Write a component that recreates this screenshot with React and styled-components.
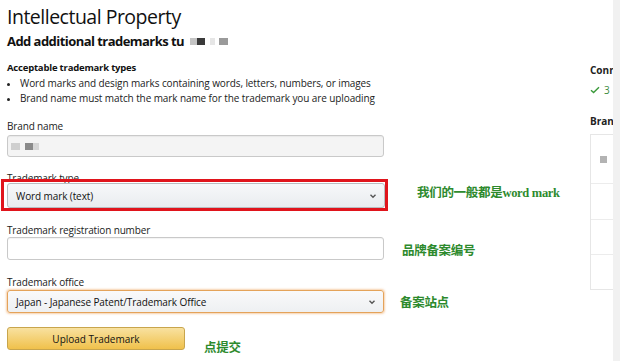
import React from "react"
import styled, { createGlobalStyle, css } from "styled-components"

const GlobalStyle = createGlobalStyle`
  html, body {
    margin: 0;
    padding: 0;
    background: #fff;
  }
  body {
    font-family: "Open Sans", "Noto Sans", sans-serif;
    color: #111;
    width: 620px;
    height: 361px;
    overflow: hidden;
  }
`

const Page = styled.div`
  display: flex;
  width: 620px;
  height: 361px;
`

const Main = styled.div`
  flex: 1;
  padding: 3px 0 0 7px;
`

const Title = styled.h1`
  margin: 0;
  font-size: 19.5px;
  font-weight: 400;
  line-height: 28px;
  letter-spacing: -0.5px;
  color: #111;
`

const Subtitle = styled.h2`
  margin: 0;
  font-size: 13px;
  font-weight: 700;
  line-height: 20px;
  letter-spacing: -0.55px;
  display: flex;
  align-items: center;
`

// blurred store name
const Blur = styled.span`
  display: inline-block;
  width: ${p => p.w}px;
  height: 7px;
  background: ${p => p.c};
  filter: blur(0.6px);
  margin-left: ${p => p.gap || 0}px;
`

const TypesHeading = styled.div`
  margin-top: 10px;
  font-size: 9.5px;
  font-weight: 700;
  line-height: 14px;
  letter-spacing: -0.2px;
`

const Bullets = styled.ul`
  margin: 1px 0 0;
  padding-left: 13px;
  font-size: 10px;
  line-height: 15px;
  letter-spacing: -0.1px;
  color: #222;
  li::marker {
    font-size: 9px;
  }
`

const Row = styled.div`
  display: flex;
  align-items: flex-end;
  margin-top: ${p => p.top}px;
`

const Field = styled.div`
  width: 377px;
  flex: none;
`

const Label = styled.div`
  font-size: 10px;
  line-height: 14px;
  letter-spacing: -0.15px;
  color: #222;
  margin-bottom: ${p => p.gap || 0}px;
`

const Input = styled.div`
  box-sizing: border-box;
  height: ${p => p.h}px;
  border: 1px solid #c9c9c9;
  border-radius: 3px;
  background: ${p => (p.disabled ? "#f4f4f4" : "#fff")};
  display: flex;
  align-items: center;
  padding-left: 10px;
  box-shadow: inset 0 1px 1px rgba(0, 0, 0, 0.05);
`

const Select = styled.div`
  box-sizing: border-box;
  height: ${p => p.h}px;
  border-radius: 3px;
  display: flex;
  align-items: center;
  justify-content: space-between;
  padding: 0 6px 0 8px;
  font-size: 10px;
  letter-spacing: -0.1px;
  color: #111;
  background: linear-gradient(#f7f8fa, #e9ecef);
  border: 1px solid #b9bcc0;
  ${p =>
    p.focused &&
    css`
      border-color: #e4a35a;
      box-shadow: 0 0 2px 1px rgba(228, 121, 17, 0.35);
      background: linear-gradient(#f9f9fa, #eef0f2);
    `}
`

const Highlight = styled.div`
  margin-left: -6px;
  width: 378px;
  border: 3px solid #e0141c;
  padding: 1px 0 0 3px;
  margin-top: -6px;
  position: relative;
`

const Note = styled.div`
  margin-left: ${p => p.left}px;
  margin-bottom: ${p => p.bottom}px;
  color: #2d8a2d;
  font-family: "Liberation Serif", "Noto Sans CJK SC", serif;
  font-weight: 700;
  font-size: 12.5px;
  white-space: nowrap;
  letter-spacing: -0.3px;
`

const Button = styled.div`
  box-sizing: border-box;
  width: 178px;
  height: 23px;
  border: 1px solid #c8a54c;
  border-radius: 3px;
  background: linear-gradient(#f8e1a0, #f0c14b);
  display: flex;
  align-items: center;
  justify-content: center;
  font-size: 10px;
  color: #111;
`

const Side = styled.div`
  width: 23px;
  flex: none;
  overflow: hidden;
  padding-top: 63px;
`

const SideHeading = styled.div`
  font-size: 10px;
  font-weight: 700;
  line-height: 14px;
  white-space: nowrap;
  color: #222;
  margin-top: ${p => p.top || 0}px;
`

const Check = styled.div`
  display: flex;
  align-items: center;
  gap: 4px;
  margin-top: 6px;
  font-size: 10px;
  color: #3a8a3a;
`

const Table = styled.div`
  margin-top: 6px;
  width: 40px;
  border: 1px solid #e6e6e6;
`

const Cell = styled.div`
  height: ${p => p.h}px;
  border-top: ${p => (p.first ? "none" : "1px solid #ececec")};
  display: flex;
  align-items: center;
  padding-left: 9px;
`

const Square = styled.span`
  width: 7px;
  height: 7px;
  background: #b3b3b3;
`

const Scrollbar = styled.div`
  width: 7px;
  flex: none;
  background: #f1f1f1;
`

const Chevron = () => (
  <svg width="10" height="10" viewBox="0 0 10 10">
    <path d="M2.5 3.8 5 6.2 7.5 3.8" fill="none" stroke="#555" strokeWidth="1.4" />
  </svg>
)

const App = () => (
  <>
    <GlobalStyle />
    <Page>
      <Main>
        <Title>Intellectual Property</Title>
        <Subtitle>
          Add additional trademarks tu
          <Blur w={7} c="#c4c4c4" gap={6} />
          <Blur w={8} c="#3a3a3a" />
          <Blur w={5} c="#e6e6e6" gap={5} />
          <Blur w={9} c="#9a9a9a" gap={4} />
        </Subtitle>
        <TypesHeading>Acceptable trademark types</TypesHeading>
        <Bullets>
          <li>Word marks and design marks containing words, letters, numbers, or images</li>
          <li>Brand name must match the mark name for the trademark you are uploading</li>
        </Bullets>

        <Row top={13}>
          <Field>
            <Label gap={2}>Brand name</Label>
            <Input h={22} disabled>
              <Blur w={9} c="#cfcfcf" gap={-7} />
              <Blur w={8} c="#8a8a8a" gap={5} />
              <Blur w={6} c="#d6d6d6" />
            </Input>
          </Field>
        </Row>

        <Row top={14}>
          <Field>
            <Label>Trademark type</Label>
            <Highlight>
              <Select h={25}>
                Word mark (text)
                <Chevron />
              </Select>
            </Highlight>
          </Field>
          <Note left={33} bottom={10}>我们的一般都是word mark</Note>
        </Row>

        <Row top={12}>
          <Field>
            <Label>Trademark registration number</Label>
            <Input h={23} />
          </Field>
          <Note left={18} bottom={1}>品牌备案编号</Note>
        </Row>

        <Row top={15}>
          <Field>
            <Label gap={1}>Trademark office</Label>
            <Select h={23} focused>
              Japan - Japanese Patent/Trademark Office
              <Chevron />
            </Select>
          </Field>
          <Note left={16} bottom={2}>备案站点</Note>
        </Row>

        <Row top={14}>
          <Button>Upload Trademark</Button>
          <Note left={19} bottom={-6}>点提交</Note>
        </Row>
      </Main>

      <Side>
        <SideHeading>Connected</SideHeading>
        <Check>
          <svg width="10" height="8" viewBox="0 0 10 8">
            <path d="M1 4.2 3.6 6.6 9 1.2" fill="none" stroke="#3a9a3a" strokeWidth="1.4" />
          </svg>
          3
        </Check>
        <SideHeading top={17}>Brands</SideHeading>
        <Table>
          <Cell first h={48}>
            <Square />
          </Cell>
          <Cell h={35} />
          <Cell h={34} />
          <Cell h={34} />
        </Table>
      </Side>
      <Scrollbar />
    </Page>
  </>
)

export default App
